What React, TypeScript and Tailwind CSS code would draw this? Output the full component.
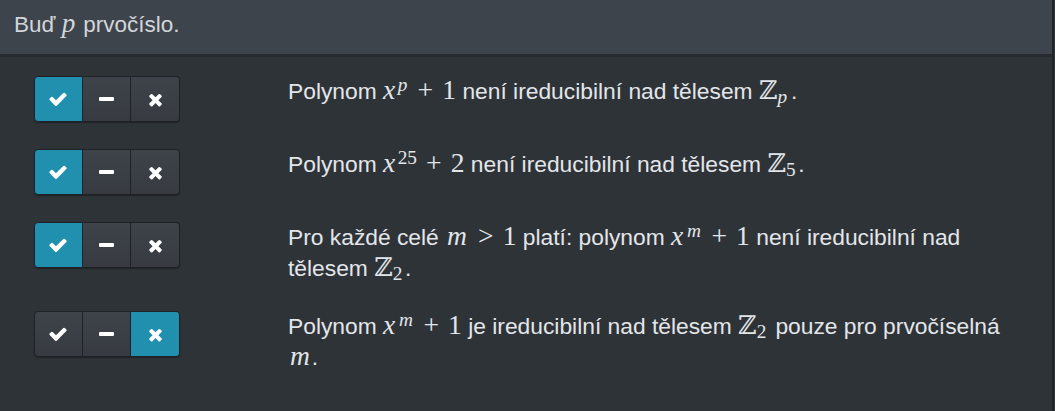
import React from "react";

const CHECK =
  "M1671 566q0 40-28 68l-724 724-136 136q-28 28-68 28t-68-28l-136-136-362-362q-28-28-28-68t28-68l136-136q28-28 68-28t68 28l294 295 656-657q28-28 68-28t68 28l136 136q28 28 28 68z";
const TIMES =
  "M1490 1322q0 40-28 68l-136 136q-28 28-68 28t-68-28l-294-294-294 294q-28 28-68 28t-68-28l-136-136q-28-28-28-68t28-68l294-294-294-294q-28-28-28-68t28-68l136-136q28-28 68-28t68 28l294 294 294-294q28-28 68-28t68 28l136 136q28 28 28 68t-28 68l-294 294 294 294q28 28 28 68z";

function CheckIcon() {
  return (
    <svg width="20" height="20" viewBox="0 0 1792 1792" fill="white">
      <path d={CHECK} />
    </svg>
  );
}
function MinusIcon() {
  return <span className="block w-[15px] h-[4px] bg-white rounded-[1px]" />;
}
function TimesIcon() {
  return (
    <svg width="19" height="19" viewBox="0 0 1792 1792" fill="white">
      <path d={TIMES} />
    </svg>
  );
}

function Btn({ active, children, first, last }: { active: boolean; children: React.ReactNode; first?: boolean; last?: boolean }) {
  return (
    <div
      className={
        "flex items-center justify-center w-[49px] h-full border-[#1e2125] " +
        (first ? "rounded-l-[4px] border " : last ? "rounded-r-[4px] border border-l-0 " : "border border-l-0 ") +
        (active ? "bg-[#2190ae]" : "bg-gradient-to-b from-[#3e434a] to-[#373b41]")
      }
    >
      {children}
    </div>
  );
}

function Group({ sel }: { sel: number }) {
  return (
    <div className="flex h-[46px] w-[146px] shrink-0 shadow-[0_1px_1px_rgba(0,0,0,0.3)] rounded-[4px]">
      <Btn active={sel === 0} first>
        <CheckIcon />
      </Btn>
      <Btn active={sel === 1}>
        <MinusIcon />
      </Btn>
      <Btn active={sel === 2} last>
        <TimesIcon />
      </Btn>
    </div>
  );
}

const mathCls = "font-['Liberation_Serif',serif] text-[1.21em] leading-none whitespace-nowrap";

function V({ children }: { children: React.ReactNode }) {
  return <span className="italic mr-[0.06em]">{children}</span>;
}
function Vm() {
  return <span className="italic mx-[0.07em]">m</span>;
}
function Sup({ children }: { children: React.ReactNode }) {
  return <span className="relative -top-[0.42em] text-[0.7em] leading-none ml-[0.04em]">{children}</span>;
}
function Sub({ children }: { children: React.ReactNode }) {
  return <span className="relative top-[0.2em] text-[0.7em] leading-none">{children}</span>;
}
function Op({ children }: { children: React.ReactNode }) {
  return <span className="mx-[0.33em]">{children}</span>;
}
function Z({ sub }: { sub: React.ReactNode }) {
  return (
    <span className={mathCls}>
      <span className="font-['DejaVu_Serif',serif] text-[0.92em]">ℤ</span>
      <Sub>{sub}</Sub>
      <span className="mr-[0.1em]" />
    </span>
  );
}
function XPow({ p, c }: { p: React.ReactNode; c: string }) {
  return (
    <span className={mathCls}>
      <V>x</V>
      <Sup>{p}</Sup>
      <Op>+</Op>
      {c}
    </span>
  );
}

export default function App() {
  const rows: { sel: number; text: React.ReactNode }[] = [
    {
      sel: 0,
      text: (
        <>
          Polynom <XPow p={<V>p</V>} c="1" /> není ireducibilní nad tělesem <Z sub={<V>p</V>} />.
        </>
      ),
    },
    {
      sel: 0,
      text: (
        <>
          Polynom <XPow p="25" c="2" /> není ireducibilní nad tělesem <Z sub="5" />.
        </>
      ),
    },
    {
      sel: 0,
      text: (
        <>
          Pro každé celé{" "}
          <span className={mathCls}>
            <Vm />
            <Op>&gt;</Op>1
          </span>{" "}
          platí: polynom <XPow p={<Vm />} c="1" /> není ireducibilní nad tělesem <Z sub="2" />.
        </>
      ),
    },
    {
      sel: 2,
      text: (
        <>
          Polynom <XPow p={<Vm />} c="1" /> je ireducibilní nad tělesem <Z sub="2" /> pouze pro prvočíselná{" "}
          <span className={mathCls}>
            <Vm />
          </span>
          .
        </>
      ),
    },
  ];

  return (
    <div className="w-[1055px] h-[411px] bg-[#2e3338] font-['Liberation_Sans',Arial,sans-serif] overflow-hidden">
      <div className="w-[1054px] h-full border-r-2 border-[#202428] flex flex-col">
        <div className="h-[57px] shrink-0 bg-[#3e444c] border-b-[3px] border-[#272b30] px-[14px] flex items-center pb-[4px] text-[22.5px] text-[#d2d6da]">
          <span>
            Buď{" "}
            <span className={mathCls}>
              <V>p</V>
            </span>{" "}
            prvočíslo.
          </span>
        </div>
        <div className="pt-[19px] pl-[34px] flex flex-col gap-[27px]">
          {rows.map((r, i) => (
            <div key={i} className="flex items-start">
              <Group sel={r.sel} />
              <div className="ml-[108px] w-[730px] text-[22.8px] leading-[31px] text-[#e3e6e9]">{r.text}</div>
            </div>
          ))}
        </div>
      </div>
    </div>
  );
}
